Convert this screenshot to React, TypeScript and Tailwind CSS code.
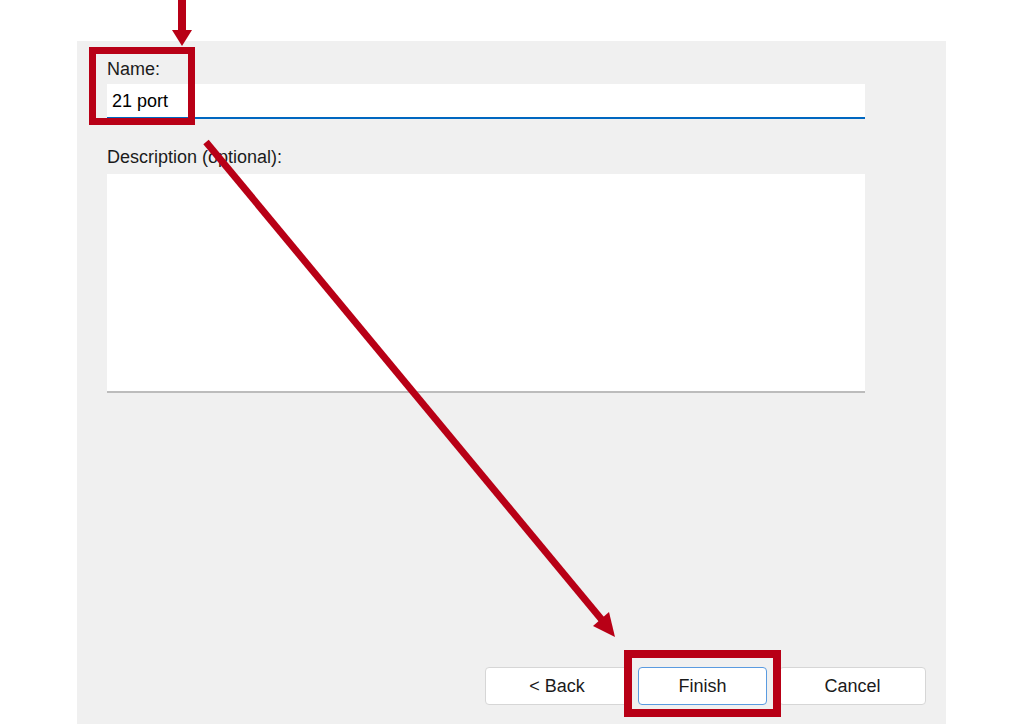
// Wizard "Name" step with red callout annotations on top.
function Annotations() {
  const red = "#b80016";
  return (
    <svg
      className="absolute inset-0 pointer-events-none"
      width={1024}
      height={724}
      viewBox="0 0 1024 724"
    >
      {/* arrow pointing down at the Name box */}
      <rect x={178} y={0} width={8} height={31} fill={red} />
      <polygon points="172,30 192,30 182,46" fill={red} />
      <rect x={92.5} y={50.5} width={99} height={71} fill="none" stroke={red} strokeWidth={7} />

      {/* diagonal arrow from Name to Finish */}
      <line x1={206} y1={142} x2={602} y2={620} stroke={red} strokeWidth={7} />
      <polygon points="615,637 593,626 609,612" fill={red} />
      <rect x={628} y={654} width={149} height={59} fill="none" stroke={red} strokeWidth={8} />
    </svg>
  );
}

export default function App() {
  return (
    <div
      className="relative w-[1024px] h-[724px] bg-white overflow-hidden"
      style={{ fontFamily: '"Liberation Sans", Arial, sans-serif' }}
    >
      <div className="pl-[77px] pt-[41px] h-full">
        <div className="w-[869px] h-full bg-[#f0f0f0] flex flex-col pt-[16px] pl-[30px]">
          <label className="text-[18px] leading-[24px] text-[#1b1b1b]">Name:</label>
          <div className="mt-[3px] w-[758px] h-[35px] bg-white border-b-2 border-[#0067c0] flex items-center pl-[5px] text-[18px] leading-[24px] text-black">
            21 port
          </div>

          <label className="mt-[26px] text-[18px] leading-[24px] text-[#1b1b1b]">Description (optional):</label>
          <div className="mt-[5px] w-[758px] h-[219px] bg-white border-b-2 border-[#bcbcbc]" />

          <div className="mt-auto mb-[19px] flex pr-[20px] justify-end">
            <button className="w-[144px] h-[38px] bg-white border border-[#d6d6d6] rounded-[4px] text-[18px] text-[#1b1b1b]">
              &lt; Back
            </button>
            <button className="ml-[9px] w-[129px] h-[38px] bg-white border border-[#5a9be0] rounded-[4px] text-[18px] text-[#1b1b1b]">
              Finish
            </button>
            <button className="ml-[12px] w-[147px] h-[38px] bg-white border border-[#d6d6d6] rounded-[4px] text-[18px] text-[#1b1b1b]">
              Cancel
            </button>
          </div>
        </div>
      </div>
      <Annotations />
    </div>
  );
}
